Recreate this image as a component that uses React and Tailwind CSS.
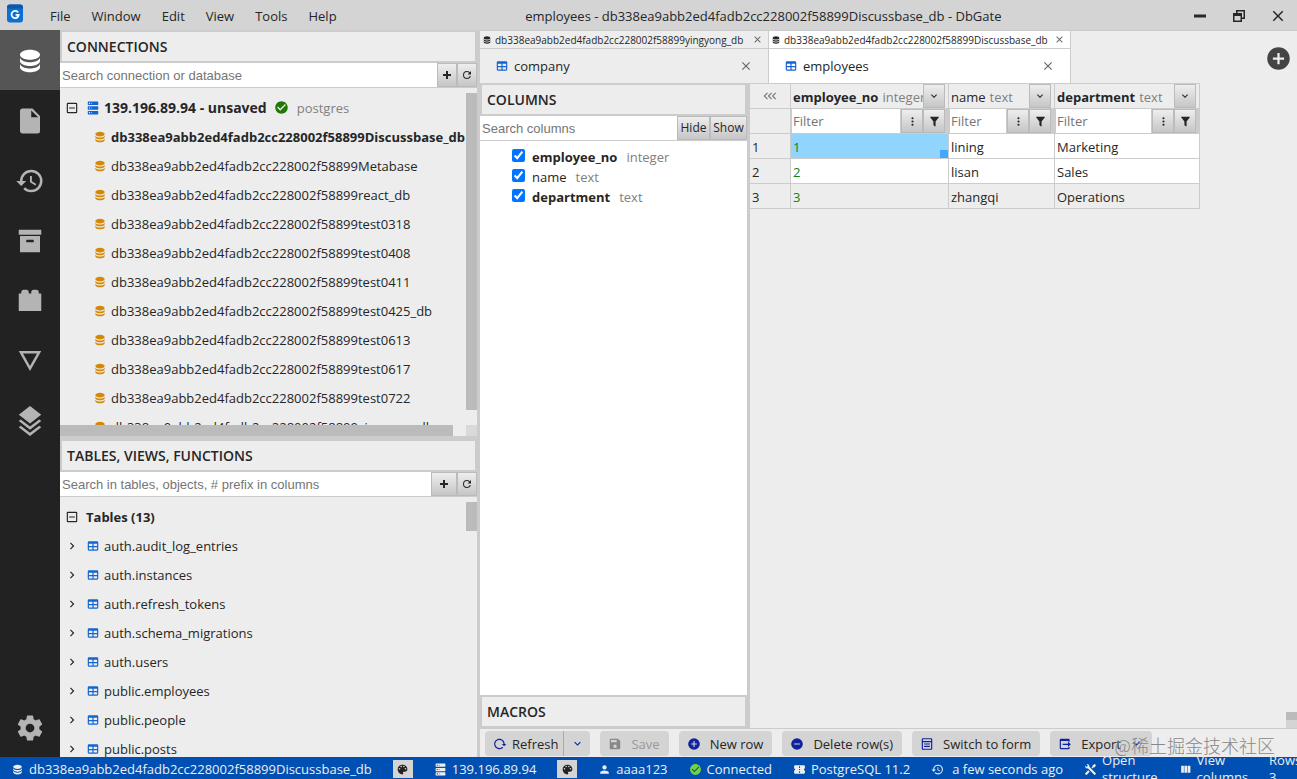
import { useState } from 'react'
import clsx from 'clsx'

// Icon shapes on a 24x24 grid
const ICONS = {
  database:
    'M12,3C7.58,3 4,4.79 4,7C4,9.21 7.58,11 12,11C16.42,11 20,9.21 20,7C20,4.79 16.42,3 12,3M4,9V12C4,14.21 7.58,16 12,16C16.42,16 20,14.21 20,12V9C20,11.21 16.42,13 12,13C7.58,13 4,11.21 4,9M4,14V17C4,19.21 7.58,21 12,21C16.42,21 20,19.21 20,17V14C20,16.21 16.42,18 12,18C7.58,18 4,16.21 4,14Z',
  file: 'M13,9H18.5L13,3.5V9M6,2H14L20,8V20A2,2 0 0,1 18,22H6C4.89,22 4,21.1 4,20V4C4,2.89 4.89,2 6,2Z',
  history:
    'M13.5,8H12V13L16.28,15.54L17,14.33L13.5,12.25V8M13,3A9,9 0 0,0 4,12H1L4.96,16.03L9,12H6A7,7 0 0,1 13,5A7,7 0 0,1 20,12A7,7 0 0,1 13,19C11.07,19 9.32,18.21 8.06,16.94L6.64,18.36C8.27,20 10.5,21 13,21A9,9 0 0,0 22,12A9,9 0 0,0 13,3',
  archive: 'M3,3H21V7H3V3M4,8H20V21H4V8M9.5,11A0.5,0.5 0 0,0 9,11.5V13H15V11.5A0.5,0.5 0 0,0 14.5,11H9.5Z',
  plugin:
    'M19,6V5A2,2 0 0,0 17,3H15A2,2 0 0,0 13,5V6H11V5A2,2 0 0,0 9,3H7A2,2 0 0,0 5,5V6H3V20H21V6H19Z',
  details: 'M3,4L12,20L21,4H3M6.38,6H17.63L12,16L6.38,6Z',
  layers:
    'M12 0L3 7L4.63 8.27L12 14L19.36 8.27L21 7L12 0M19.37 10.73L12 16.47L4.62 10.74L3 12L12 19L21 12L19.37 10.73M19.37 15.73L12 21.47L4.62 15.74L3 17L12 24L21 17L19.37 15.73Z',
  cog: 'M12,15.5A3.5,3.5 0 0,1 8.5,12A3.5,3.5 0 0,1 12,8.5A3.5,3.5 0 0,1 15.5,12A3.5,3.5 0 0,1 12,15.5M19.43,12.97C19.47,12.65 19.5,12.33 19.5,12C19.5,11.67 19.47,11.34 19.43,11L21.54,9.37C21.73,9.22 21.78,8.95 21.66,8.73L19.66,5.27C19.54,5.05 19.27,4.96 19.05,5.05L16.56,6.05C16.04,5.66 15.5,5.32 14.87,5.07L14.5,2.42C14.46,2.18 14.25,2 14,2H10C9.75,2 9.54,2.18 9.5,2.42L9.13,5.07C8.5,5.32 7.96,5.66 7.44,6.05L4.95,5.05C4.73,4.96 4.46,5.05 4.34,5.27L2.34,8.73C2.21,8.95 2.27,9.22 2.46,9.37L4.57,11C4.53,11.34 4.5,11.67 4.5,12C4.5,12.33 4.53,12.65 4.57,12.97L2.46,14.63C2.27,14.78 2.21,15.05 2.34,15.27L4.34,18.73C4.46,18.95 4.73,19.03 4.95,18.95L7.44,17.94C7.96,18.34 8.5,18.68 9.13,18.93L9.5,21.58C9.54,21.82 9.75,22 10,22H14C14.25,22 14.46,21.82 14.5,21.58L14.87,18.93C15.5,18.67 16.04,18.34 16.56,17.94L19.05,18.95C19.27,19.03 19.54,18.95 19.66,18.73L21.66,15.27C21.78,15.05 21.73,14.78 21.54,14.63L19.43,12.97Z',
  minusBox:
    'M19,19V5H5V19H19M19,3A2,2 0 0,1 21,5V19A2,2 0 0,1 19,21H5A2,2 0 0,1 3,19V5C3,3.89 3.9,3 5,3H19M17,11V13H7V11H17Z',
  chevronRight: 'M8.59,16.58L13.17,12L8.59,7.41L10,6L16,12L10,18L8.59,16.58Z',
  chevronDown: 'M7.41,8.58L12,13.17L16.59,8.58L18,10L12,16L6,10L7.41,8.58Z',
  tripleLeft:
    'M8.4,7.4L7,6L1,12L7,18L8.4,16.6L3.8,12L8.4,7.4M15.4,7.4L14,6L8,12L14,18L15.4,16.6L10.8,12L15.4,7.4M22.4,7.4L21,6L15,12L21,18L22.4,16.6L17.8,12L22.4,7.4Z',
  server:
    'M4,1H20A1,1 0 0,1 21,2V6A1,1 0 0,1 20,7H4A1,1 0 0,1 3,6V2A1,1 0 0,1 4,1M4,9H20A1,1 0 0,1 21,10V14A1,1 0 0,1 20,15H4A1,1 0 0,1 3,14V10A1,1 0 0,1 4,9M4,17H20A1,1 0 0,1 21,18V22A1,1 0 0,1 20,23H4A1,1 0 0,1 3,22V18A1,1 0 0,1 4,17M9,5H10V3H9V5M9,13H10V11H9V13M9,21H10V19H9V21M5,3V5H7V3H5M5,11V13H7V11H5M5,19V21H7V19H5Z',
  check:
    'M12 2C6.5 2 2 6.5 2 12S6.5 22 12 22 22 17.5 22 12 17.5 2 12 2M10 17L5 12L6.41 10.59L10 14.17L17.59 6.58L19 8L10 17Z',
  table:
    'M5,4H19A2,2 0 0,1 21,6V18A2,2 0 0,1 19,20H5A2,2 0 0,1 3,18V6A2,2 0 0,1 5,4M5,8V12H11V8H5M13,8V12H19V8H13M5,14V18H11V14H5M13,14V18H19V14H13Z',
  close:
    'M19,6.41L17.59,5L12,10.59L6.41,5L5,6.41L10.59,12L5,17.59L6.41,19L12,13.41L17.59,19L19,17.59L13.41,12L19,6.41Z',
  plusCircle: 'M17,13H13V17H11V13H7V11H11V7H13V11H17M12,2A10,10 0 0,0 2,12A10,10 0 0,0 12,22A10,10 0 0,0 22,12A10,10 0 0,0 12,2Z',
  minusCircle: 'M17,13H7V11H17M12,2A10,10 0 0,0 2,12A10,10 0 0,0 12,22A10,10 0 0,0 22,12A10,10 0 0,0 12,2Z',
  plus: 'M20 14H14V20H10V14H4V10H10V4H14V10H20V14Z',
  minimize: 'M20,14H4V10H20',
  restore: 'M4,8H8V4H20V16H16V20H4V8M16,8V14H18V6H10V8H16M6,12V18H14V12H6Z',
  refresh:
    'M17.65,6.35C16.2,4.9 14.21,4 12,4A8,8 0 0,0 4,12A8,8 0 0,0 12,20C15.73,20 18.84,17.45 19.73,14H17.65C16.83,16.33 14.61,18 12,18A6,6 0 0,1 6,12A6,6 0 0,1 12,6C13.66,6 15.14,6.69 16.22,7.78L13,11H20V4L17.65,6.35Z',
  reload:
    'M2 12C2 16.97 6.03 21 11 21C13.39 21 15.68 20.06 17.4 18.4L15.9 16.9C14.63 18.25 12.86 19 11 19C4.76 19 1.64 11.46 6.05 7.05C10.46 2.64 18 5.77 18 12H15L19 16H19.1L23 12H20C20 7.03 15.97 3 11 3C6.03 3 2 7.03 2 12Z',
  save: 'M15,9H5V5H15M12,19A3,3 0 0,1 9,16A3,3 0 0,1 12,13A3,3 0 0,1 15,16A3,3 0 0,1 12,19M17,3H5C3.89,3 3,3.9 3,5V19A2,2 0 0,0 5,21H19A2,2 0 0,0 21,19V7L17,3Z',
  palette:
    'M17.5,12A1.5,1.5 0 0,1 16,10.5A1.5,1.5 0 0,1 17.5,9A1.5,1.5 0 0,1 19,10.5A1.5,1.5 0 0,1 17.5,12M14.5,8A1.5,1.5 0 0,1 13,6.5A1.5,1.5 0 0,1 14.5,5A1.5,1.5 0 0,1 16,6.5A1.5,1.5 0 0,1 14.5,8M9.5,8A1.5,1.5 0 0,1 8,6.5A1.5,1.5 0 0,1 9.5,5A1.5,1.5 0 0,1 11,6.5A1.5,1.5 0 0,1 9.5,8M6.5,12A1.5,1.5 0 0,1 5,10.5A1.5,1.5 0 0,1 6.5,9A1.5,1.5 0 0,1 8,10.5A1.5,1.5 0 0,1 6.5,12M12,3A9,9 0 0,0 3,12A9,9 0 0,0 12,21A1.5,1.5 0 0,0 13.5,19.5C13.5,19.11 13.35,18.76 13.11,18.5C12.88,18.23 12.73,17.88 12.73,17.5A1.5,1.5 0 0,1 14.23,16H16A5,5 0 0,0 21,11C21,6.58 16.97,3 12,3Z',
  account: 'M12,4A4,4 0 0,1 16,8A4,4 0 0,1 12,12A4,4 0 0,1 8,8A4,4 0 0,1 12,4M12,14C16.42,14 20,15.79 20,18V20H4V18C4,15.79 7.58,14 12,14Z',
  filter:
    'M14,12V19.88C14.04,20.18 13.94,20.5 13.71,20.71C13.32,21.1 12.69,21.1 12.3,20.71L10.29,18.7C10.06,18.47 9.96,18.16 10,17.87V12H9.97L4.21,4.62C3.87,4.19 3.95,3.56 4.38,3.22C4.57,3.08 4.78,3 5,3H19C19.22,3 19.43,3.08 19.62,3.22C20.05,3.56 20.13,4.19 19.79,4.62L14.03,12H14Z',
  dots: 'M12,16A2,2 0 1,1 12,20A2,2 0 1,1 12,16M12,10A2,2 0 1,1 12,14A2,2 0 1,1 12,10M12,4A2,2 0 1,1 12,8A2,2 0 1,1 12,4Z',
  tools:
    'M21.71 20.29L20.29 21.71A1 1 0 0 1 18.88 21.71L7 9.85A3.81 3.81 0 0 1 6 10A4 4 0 0 1 2.22 4.7L4.76 7.24L5.29 6.71L6.71 5.29L7.24 4.76L4.7 2.22A4 4 0 0 1 10 6A3.81 3.81 0 0 1 9.85 7L21.71 18.88A1 1 0 0 1 21.71 20.29M2.29 18.88A1 1 0 0 0 2.29 20.29L3.71 21.71A1 1 0 0 0 5.12 21.71L10.59 16.25L7.76 13.42M20 2L16 4V6L13.83 8.17L15.83 10.17L18 8H20L22 4Z',
  columns: 'M16,5V18H21V5M4,18H9V5H4M10,18H15V5H10V18Z',
  ticket:
    'M4,4A2,2 0 0,0 2,6V10A2,2 0 0,1 4,12A2,2 0 0,1 2,14V18A2,2 0 0,0 4,20H20A2,2 0 0,0 22,18V14A2,2 0 0,1 20,12A2,2 0 0,1 22,10V6A2,2 0 0,0 20,4H4M11,6H13V9H11V6M11,11H13V13H11V11M11,15H13V18H11V15Z',
  form: 'M5,2H19A2,2 0 0,1 21,4V20A2,2 0 0,1 19,22H5A2,2 0 0,1 3,20V4A2,2 0 0,1 5,2M5,4V7H19V4H5M5,9V20H19V9H5M7,11H17V13H7V11M7,15H17V17H7V15Z',
  export:
    'M5,3H18A2,2 0 0,1 20,5V8H18V7H5V19H18V17H20V19A2,2 0 0,1 18,21H5A2,2 0 0,1 3,19V5A2,2 0 0,1 5,3M17,8L22,12.5L17,17V13.5H8V11.5H17V8Z',
}

function Icon({ name, className = 'size-[14px]' }) {
  return (
    <svg viewBox="0 0 24 24" fill="currentColor" fillRule="evenodd" aria-hidden="true" className={clsx('shrink-0', className)}>
      <path d={ICONS[name]} />
    </svg>
  )
}

const MENU = ['File', 'Window', 'Edit', 'View', 'Tools', 'Help']
const WIDGETS = ['database', 'file', 'history', 'archive', 'plugin', 'details', 'layers']

const DB_PREFIX = 'db338ea9abb2ed4fadb2cc228002f58899'
const DATABASES = [
  'Discussbase_db',
  'Metabase',
  'react_db',
  'test0318',
  'test0408',
  'test0411',
  'test0425_db',
  'test0613',
  'test0617',
  'test0722',
  'yingyong_db',
]

const TABLES = [
  'auth.audit_log_entries',
  'auth.instances',
  'auth.refresh_tokens',
  'auth.schema_migrations',
  'auth.users',
  'public.employees',
  'public.people',
  'public.posts',
]

const COLUMNS = [
  { name: 'employee_no', type: 'integer', required: true },
  { name: 'name', type: 'text', required: false },
  { name: 'department', type: 'text', required: true },
]

const ROWS = [
  { employee_no: 1, name: 'lining', department: 'Marketing' },
  { employee_no: 2, name: 'lisan', department: 'Sales' },
  { employee_no: 3, name: 'zhangqi', department: 'Operations' },
]

function TitleBar() {
  return (
    <header className="flex h-[30px] shrink-0 items-center bg-[#d4d4d4] pt-[2px]">
      <svg viewBox="0 0 16 18" aria-hidden="true" className="mb-[6px] ml-[7px] h-[19px] w-4 shrink-0">
        <rect width="16" height="18" rx="3" fill="#0b6fd6" />
        <path d="M0 3a3 3 0 0 1 3-3h10a3 3 0 0 1 3 3v1H0z" fill="#1057a8" />
        <path d="M11.1 8A3.6 3.6 0 1 0 11.7 10.4H8.6" fill="none" stroke="#fff" strokeWidth="1.8" />
      </svg>
      <nav className="ml-[17px] flex gap-px">
        {MENU.map((item) => (
          <button key={item} type="button" className="px-[10px]">
            {item}
          </button>
        ))}
      </nav>
      <h1 className="flex-1 text-center whitespace-nowrap">employees - {DB_PREFIX}Discussbase_db - DbGate</h1>
      {['minimize', 'restore', 'close'].map((name) => (
        <button key={name} type="button" aria-label={name} className="flex w-[39px] justify-center">
          <Icon name={name} className="size-[18px]" />
        </button>
      ))}
    </header>
  )
}

function WidgetBar() {
  const [selected, setSelected] = useState('database')
  return (
    <nav className="flex w-[60px] shrink-0 flex-col bg-[#222] text-[#b4b4b4]">
      {WIDGETS.map((name) => (
        <button
          key={name}
          type="button"
          aria-label={name}
          onClick={() => setSelected(name)}
          className={clsx('flex h-[60px] items-center justify-center pt-[2px]', selected === name && 'bg-[#555] text-white')}
        >
          <Icon name={name} className="size-[30px]" />
        </button>
      ))}
      <button type="button" aria-label="Settings" className="mt-auto flex h-[60px] items-center justify-center pt-[2px]">
        <Icon name="cog" className="size-[30px]" />
      </button>
    </nav>
  )
}

function WidgetTitle({ children }) {
  return (
    <h2 className="flex h-[33px] shrink-0 items-center border-2 border-[#ccc] pl-[5px] text-[14px] font-semibold">
      {children}
    </h2>
  )
}

function InlineButton({ children, className, ...props }) {
  return (
    <button
      type="button"
      className={clsx(
        'flex shrink-0 items-center justify-center border border-[#bbb] bg-linear-to-b from-[#eee] to-[#c6c6c6]',
        className,
      )}
      {...props}
    >
      {children}
    </button>
  )
}

function SearchRow({ placeholder, children }) {
  return (
    <div className="flex h-[25px] shrink-0 border-b border-[#ccc]">
      <input
        type="text"
        aria-label={placeholder}
        placeholder={placeholder}
        className="min-w-0 flex-1 bg-white px-[2px] pt-[2px] font-['Liberation_Sans',sans-serif] text-[13px] outline-none placeholder:text-[#757575]"
      />
      {children}
    </div>
  )
}

function ConnectionTree() {
  return (
    <div className="mt-[5px] flex min-h-0 flex-1 flex-col">
      <div className="flex min-h-0 flex-1">
        <div className="min-w-0 flex-1 overflow-hidden">
          <div className="flex h-[29px] items-center pl-[5px] whitespace-nowrap">
            <Icon name="minusBox" />
            <Icon name="server" className="ml-[7px] size-[14px] text-[#1464d2]" />
            <span className="ml-1 text-[14px] font-bold">139.196.89.94 - unsaved</span>
            <Icon name="check" className="ml-[7px] size-[15px] text-[#237804]" />
            <span className="ml-2 text-[#808080]">postgres</span>
          </div>
          {DATABASES.map((db, i) => (
            <div key={db} className={clsx('flex h-[29px] items-center gap-1 pl-[33px]', i === 0 && 'font-bold')}>
              <Icon name="database" className="size-[14px] text-[#d48806]" />
              <span className="whitespace-nowrap">{DB_PREFIX + db}</span>
            </div>
          ))}
        </div>
        <div className="w-[11px] shrink-0">
          <div className="h-[317px] bg-[#bbb]" />
        </div>
      </div>
      <div className="flex h-[11px] shrink-0">
        <div className="mr-[13px] flex-1 bg-[#bbb]" />
        <div className="w-[11px] bg-[#d9d9d9]" />
      </div>
    </div>
  )
}

function TableTree() {
  return (
    <div className="mt-[5px] flex min-h-0 flex-1">
      <div className="min-w-0 flex-1 overflow-hidden">
        <div className="flex h-[29px] items-center pl-[5px]">
          <Icon name="minusBox" />
          <span className="ml-[7px] font-bold">Tables (13)</span>
        </div>
        {TABLES.map((table) => (
          <div key={table} className="flex h-[29px] items-center pl-[5px]">
            <Icon name="chevronRight" />
            <Icon name="table" className="ml-[7px] size-[14px] text-[#1464d2]" />
            <span className="ml-1">{table}</span>
          </div>
        ))}
      </div>
      <div className="w-[11px] shrink-0">
        <div className="h-[29px] bg-[#bbb]" />
      </div>
    </div>
  )
}

function LeftPanel() {
  return (
    <aside className="flex w-[420px] shrink-0 flex-col border-r-3 border-[#ccc]">
      <section className="flex h-[406px] shrink-0 flex-col">
        <WidgetTitle>CONNECTIONS</WidgetTitle>
        <SearchRow placeholder="Search connection or database">
          <InlineButton aria-label="Add connection" className="w-[20px]">
            <Icon name="plus" className="size-[12px]" />
          </InlineButton>
          <InlineButton aria-label="Refresh connections" className="w-[20px]">
            <Icon name="refresh" className="size-[12px]" />
          </InlineButton>
        </SearchRow>
        <ConnectionTree />
      </section>
      <section className="flex min-h-0 flex-1 flex-col border-t-3 border-[#ccc]">
        <WidgetTitle>TABLES, VIEWS, FUNCTIONS</WidgetTitle>
        <SearchRow placeholder="Search in tables, objects, # prefix in columns">
          <InlineButton aria-label="Add table" className="w-[26px]">
            <Icon name="plus" className="size-[12px]" />
          </InlineButton>
          <InlineButton aria-label="Refresh tables" className="w-[20px]">
            <Icon name="refresh" className="size-[12px]" />
          </InlineButton>
        </SearchRow>
        <TableTree />
      </section>
    </aside>
  )
}

function Tab({ db, file, active, className }) {
  return (
    <div className={clsx('flex flex-col border-r border-[#ccc]', active && 'bg-white', className)}>
      <div className="flex h-[18px] items-center border-b border-[#ccc] pl-[2px] text-[10px]">
        <Icon name="database" className="size-[10px]" />
        <span className="ml-[3px] flex-1 whitespace-nowrap">{db}</span>
        <button type="button" aria-label={'Close ' + db} className="mr-[5px] text-[#666]">
          <Icon name="close" className="size-[11px]" />
        </button>
      </div>
      <div className="flex h-[34px] items-center pl-[15px]">
        <Icon name="table" className="size-[14px] text-[#1464d2]" />
        <span className="ml-[5px] flex-1">{file}</span>
        <button type="button" aria-label={'Close ' + file} className="mr-[15px] text-[#666]">
          <Icon name="close" className="size-[14px]" />
        </button>
      </div>
    </div>
  )
}

function TabsPanel() {
  return (
    <div className="flex shrink-0 border-t border-[#ccc]">
      <Tab db={DB_PREFIX + 'yingyong_db'} file="company" className="w-[289px]" />
      <Tab db={DB_PREFIX + 'Discussbase_db'} file="employees" active className="w-[302px]" />
      <button type="button" aria-label="New tab" className="mt-[3px] mr-[5px] ml-auto self-center text-[#444]">
        <Icon name="plusCircle" className="size-[27px]" />
      </button>
    </div>
  )
}

function ColumnManager() {
  return (
    <aside className="flex w-[270px] shrink-0 flex-col border-r-3 border-[#ccc]">
      <WidgetTitle>COLUMNS</WidgetTitle>
      <SearchRow placeholder="Search columns">
        <InlineButton className="w-[33px] text-[12px]">Hide</InlineButton>
        <InlineButton className="w-[37px] text-[12px]">Show</InlineButton>
      </SearchRow>
      <div className="flex-1 bg-white pt-[6px] pl-8">
        {COLUMNS.map((col) => (
          <label key={col.name} className="flex h-5 items-center">
            <input type="checkbox" defaultChecked className="mb-[3px] size-[13px] accent-[#0075ff]" />
            <span className={clsx('ml-[7px]', col.required && 'font-bold')}>{col.name}</span>
            <span className="ml-[9px] text-[#808080]">{col.type}</span>
          </label>
        ))}
      </div>
      <WidgetTitle>MACROS</WidgetTitle>
    </aside>
  )
}

function DataGrid() {
  return (
    <table className="w-[450px] table-fixed border-separate border-spacing-0 text-left">
      <colgroup>
        <col className="w-[41px]" />
        <col className="w-[158px]" />
        <col className="w-[106px]" />
        <col className="w-[145px]" />
      </colgroup>
      <thead>
        <tr className="h-[25px]">
          <th className="border-r border-b border-[#ccc] p-0">
            <button type="button" aria-label="Hide columns" className="flex w-full justify-center text-[#777]">
              <Icon name="tripleLeft" />
            </button>
          </th>
          {COLUMNS.map((col) => (
            <th key={col.name} className="border-r border-b border-[#ccc] p-0 font-normal">
              <div className="flex h-6">
                <div className="flex-1 overflow-hidden pl-[2px] leading-[26px] whitespace-nowrap">
                  <span className={clsx(col.required && 'font-bold')}>{col.name}</span>
                  <span className="ml-1 text-[#808080]">{col.type}</span>
                </div>
                <InlineButton aria-label={col.name + ' menu'} className="mr-[3px] w-[22px]">
                  <Icon name="chevronDown" className="size-[12px]" />
                </InlineButton>
              </div>
            </th>
          ))}
        </tr>
        <tr className="h-[25px]">
          <td className="border-r border-b border-[#ccc] p-0" />
          {COLUMNS.map((col) => (
            <td key={col.name} className="border-r border-b border-[#ccc] p-0">
              <div className="flex h-6 bg-[#ccc] pr-[3px]">
                <input
                  type="text"
                  aria-label={'Filter ' + col.name}
                  placeholder="Filter"
                  className="mr-px ml-px min-w-0 flex-1 bg-white px-px outline-none placeholder:text-[#757575]"
                />
                <InlineButton aria-label={col.name + ' filter options'} className="w-[22px]">
                  <Icon name="dots" className="size-[13px]" />
                </InlineButton>
                <InlineButton aria-label={col.name + ' filter'} className="w-[22px]">
                  <Icon name="filter" className="size-[13px]" />
                </InlineButton>
              </div>
            </td>
          ))}
        </tr>
      </thead>
      <tbody>
        {ROWS.map((row, i) => (
          <tr key={row.employee_no} className={clsx('h-[25px]', i < 2 && 'bg-white')}>
            <th className="border-r border-b border-[#ccc] bg-[#ededed] px-[2px] pt-[2px] pb-0 font-normal">{i + 1}</th>
            <td
              className={clsx(
                'relative border-r border-b border-[#ccc] px-[2px] pt-[2px] pb-0 text-[#128012]',
                i === 0 && 'bg-[#91d5ff]',
              )}
            >
              {row.employee_no}
              {i === 0 && <span className="absolute right-0 bottom-0 size-2 bg-[#40a9ff]" />}
            </td>
            <td className="border-r border-b border-[#ccc] px-[2px] pt-[2px] pb-0">{row.name}</td>
            <td className="border-r border-b border-[#ccc] px-[2px] pt-[2px] pb-0">{row.department}</td>
          </tr>
        ))}
      </tbody>
    </table>
  )
}

function ToolButton({ icon, children, disabled, className = 'gap-[9px] pr-[9px]' }) {
  return (
    <button
      type="button"
      disabled={disabled}
      className={clsx('flex h-[25px] items-center rounded bg-[#d4d4d4] pl-2 disabled:text-[#999]', className)}
    >
      <Icon name={icon} className={clsx('size-[14px]', disabled ? 'text-[#888]' : 'text-[#10239e]')} />
      {children}
    </button>
  )
}

function Toolbar() {
  return (
    <div className="relative flex h-[29px] shrink-0 items-start gap-[10px] border-t border-[#ccc] pt-[2px] pl-[5px] whitespace-nowrap">
      <div className="flex">
        <ToolButton icon="reload" className="gap-[5px] rounded-r-none pr-[5px]">
          Refresh
        </ToolButton>
        <button
          type="button"
          aria-label="Refresh options"
          className="flex w-[27px] items-center justify-center rounded-r border-l border-[#aaa] bg-[#d4d4d4] text-[#10239e]"
        >
          <Icon name="chevronDown" className="size-[13px]" />
        </button>
      </div>
      <ToolButton icon="save" disabled>
        Save
      </ToolButton>
      <ToolButton icon="plusCircle">New row</ToolButton>
      <ToolButton icon="minusCircle">Delete row(s)</ToolButton>
      <ToolButton icon="form">Switch to form</ToolButton>
      <ToolButton icon="export">
        Export
        <Icon name="chevronDown" className="size-[13px] text-[#10239e]" />
      </ToolButton>
      <span className="pointer-events-none absolute right-[22px] bottom-0 font-['Noto_Sans_CJK_SC',sans-serif] text-[18px] leading-6 font-light text-[#888]">
        @稀土掘金技术社区
      </span>
    </div>
  )
}

function StatusItem({ icon, children, iconClassName, wrap }) {
  return (
    <div className={clsx('flex items-center gap-[5px]', wrap ? 'w-min leading-[17px]' : 'whitespace-nowrap')}>
      {icon && <Icon name={icon} className={clsx('size-[13px]', iconClassName)} />}
      <span>{children}</span>
    </div>
  )
}

function PaletteButton() {
  return (
    <button type="button" aria-label="Connection color" className="flex h-[18px] w-5 shrink-0 items-center justify-center bg-[#d4d4d4] text-[#222]">
      <Icon name="palette" className="size-[13px]" />
    </button>
  )
}

function StatusBar() {
  return (
    <footer className="flex h-[22px] shrink-0 items-center gap-[21px] overflow-hidden bg-[#0050b3] pt-[2px] pl-[11px] text-[#eee]">
      <StatusItem icon="database">{DB_PREFIX}Discussbase_db</StatusItem>
      <PaletteButton />
      <StatusItem icon="server">139.196.89.94</StatusItem>
      <PaletteButton />
      <StatusItem icon="account">aaaa123</StatusItem>
      <StatusItem icon="check" iconClassName="text-[#73d13d]">
        Connected
      </StatusItem>
      <StatusItem icon="ticket">PostgreSQL 11.2</StatusItem>
      <StatusItem icon="history" iconClassName="mr-[3px]">
        a few seconds ago
      </StatusItem>
      <StatusItem icon="tools" wrap>
        Open structure
      </StatusItem>
      <StatusItem icon="columns" wrap>
        View columns
      </StatusItem>
      <StatusItem wrap>Rows: 3</StatusItem>
    </footer>
  )
}

export default function App() {
  return (
    <div className="flex h-screen flex-col overflow-hidden bg-[#ededed] font-['Open_Sans',sans-serif] text-[13px] leading-5 text-[#262626]">
      <TitleBar />
      <div className="flex min-h-0 flex-1">
        <WidgetBar />
        <LeftPanel />
        <main className="flex min-w-0 flex-1 flex-col">
          <TabsPanel />
          <div className="flex min-h-0 flex-1">
            <ColumnManager />
            <div className="flex min-w-0 flex-1 items-end justify-between">
              <div className="self-start border-t border-[#ccc]">
                <DataGrid />
              </div>
              <div className="h-4 w-[11px] border-t-8 border-[#bbb] bg-[#d4d4d4]" />
            </div>
          </div>
          <Toolbar />
        </main>
      </div>
      <StatusBar />
    </div>
  )
}
